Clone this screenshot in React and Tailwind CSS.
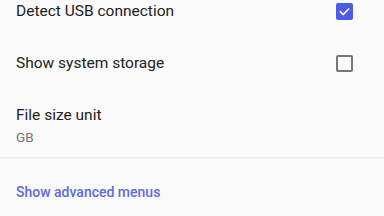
const Checkbox = ({ checked }) =>
  checked ? (
    <div className="w-[17px] h-[17px] rounded-[2px] bg-[#4c5ce6] flex items-center justify-center">
      <svg width="13" height="13" viewBox="0 0 24 24" fill="none" stroke="white" strokeWidth="3" strokeLinecap="square">
        <path d="M4.5 12.5l5 5 10-10" />
      </svg>
    </div>
  ) : (
    <div className="w-[17px] h-[17px] rounded-[2px] border-2 border-[#767676]" />
  );

export default function App() {
  return (
    <div className="w-[384px] h-[216px] bg-[#fafafa] overflow-hidden font-['Roboto',sans-serif]">
      <div className="flex items-center justify-between pl-4 pr-[31px] h-[20px] mt-px">
        <span className="text-[15.5px] leading-5 text-[#212121]">Detect USB connection</span>
        <Checkbox checked />
      </div>
      <div className="flex items-center justify-between pl-4 pr-[31px] h-[20px] mt-[32px]">
        <span className="text-[15.5px] leading-5 text-[#212121]">Show system storage</span>
        <Checkbox />
      </div>
      <div className="flex flex-col pl-4 mt-[32px]">
        <span className="text-[15.5px] leading-5 text-[#212121]">File size unit</span>
        <span className="text-[13.5px] leading-4 text-[#757575] mt-[4px]">GB</span>
      </div>
      <div className="mt-[12px] h-[2px] bg-[#ebebeb] border-b border-[#f3f3f3]" />
      <div className="pl-4 mt-[21px]">
        <span className="text-[14px] leading-5 font-medium text-[#5d6bdb]">Show advanced menus</span>
      </div>
    </div>
  );
}
